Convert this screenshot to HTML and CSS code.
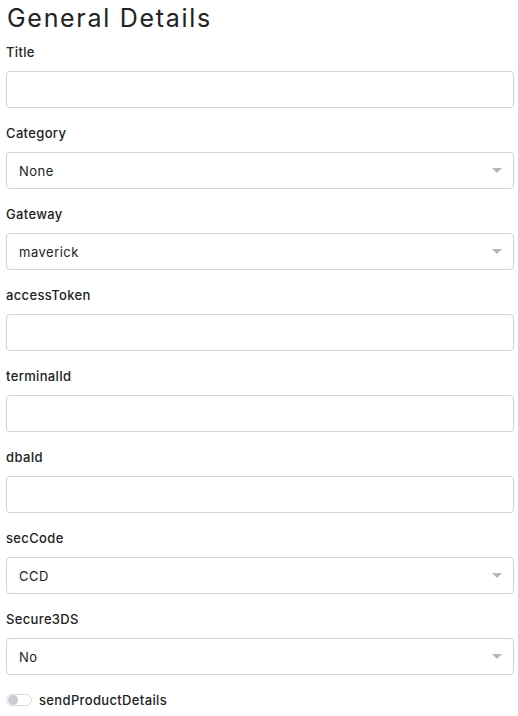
FILE: index.html
```html
<!DOCTYPE html>
<html lang="en">
<head>
<meta charset="utf-8">
<link rel="stylesheet" href="styles.css">
</head>
<body>
<main class="form">
  <h1 class="title">General Details</h1>

  <div class="group">
    <label class="label">Title</label>
    <div class="field"></div>
  </div>

  <div class="group">
    <label class="label">Category</label>
    <div class="field select"><span class="value">None</span><span class="caret"></span></div>
  </div>

  <div class="group">
    <label class="label">Gateway</label>
    <div class="field select"><span class="value">maverick</span><span class="caret"></span></div>
  </div>

  <div class="group">
    <label class="label">accessToken</label>
    <div class="field"></div>
  </div>

  <div class="group">
    <label class="label">terminalId</label>
    <div class="field"></div>
  </div>

  <div class="group">
    <label class="label">dbaId</label>
    <div class="field"></div>
  </div>

  <div class="group">
    <label class="label">secCode</label>
    <div class="field select"><span class="value">CCD</span><span class="caret"></span></div>
  </div>

  <div class="group">
    <label class="label">Secure3DS</label>
    <div class="field select"><span class="value">No</span><span class="caret"></span></div>
  </div>

  <div class="toggle-row">
    <span class="toggle"><span class="knob"></span></span>
    <span class="toggle-label">sendProductDetails</span>
  </div>
</main>
</body>
</html>
```

FILE: styles.css
```css
* { box-sizing: border-box; }
html, body { margin: 0; padding: 0; background: #fff; }
body { font-family: "Inter", "Liberation Sans", sans-serif; color: #222; }
.form { padding: 0 4px 0 6px; display: flex; flex-direction: column; }
.title {
  margin: 3px 0 9px 1px;
  font-size: 25px;
  line-height: 30px;
  font-weight: 400;
  color: #222;
  letter-spacing: 1.7px;
}
.group { display: flex; flex-direction: column; margin-bottom: 15px; }
.label {
  font-size: 13px;
  line-height: 20px;
  font-weight: 500;
  color: #222;
  margin-bottom: 9px;
  letter-spacing: 0.35px;
}
.field {
  height: 37px;
  border: 1px solid #ced3d9;
  border-radius: 4px;
  background: #fff;
  display: flex;
  align-items: center;
  padding: 0 12px;
}
.value { flex: 1; font-size: 13px; color: #222; letter-spacing: 0.5px; }
.caret {
  width: 0; height: 0;
  margin-right: -1px;
  border-left: 5px solid transparent;
  border-right: 5px solid transparent;
  border-top: 5px solid #b3b8be;
}
.toggle-row { display: flex; align-items: center; gap: 7px; margin-top: 2px; }
.toggle {
  width: 26px; height: 12px;
  border: 1px solid #d9dce0;
  border-radius: 6px;
  background: #fff;
  display: flex; align-items: center; padding: 0 1px;
}
.knob { width: 10px; height: 10px; border-radius: 50%; background: #c9ccd0; }
.toggle-label { font-size: 13px; font-weight: 500; color: #222; letter-spacing: 0.35px; }
```
